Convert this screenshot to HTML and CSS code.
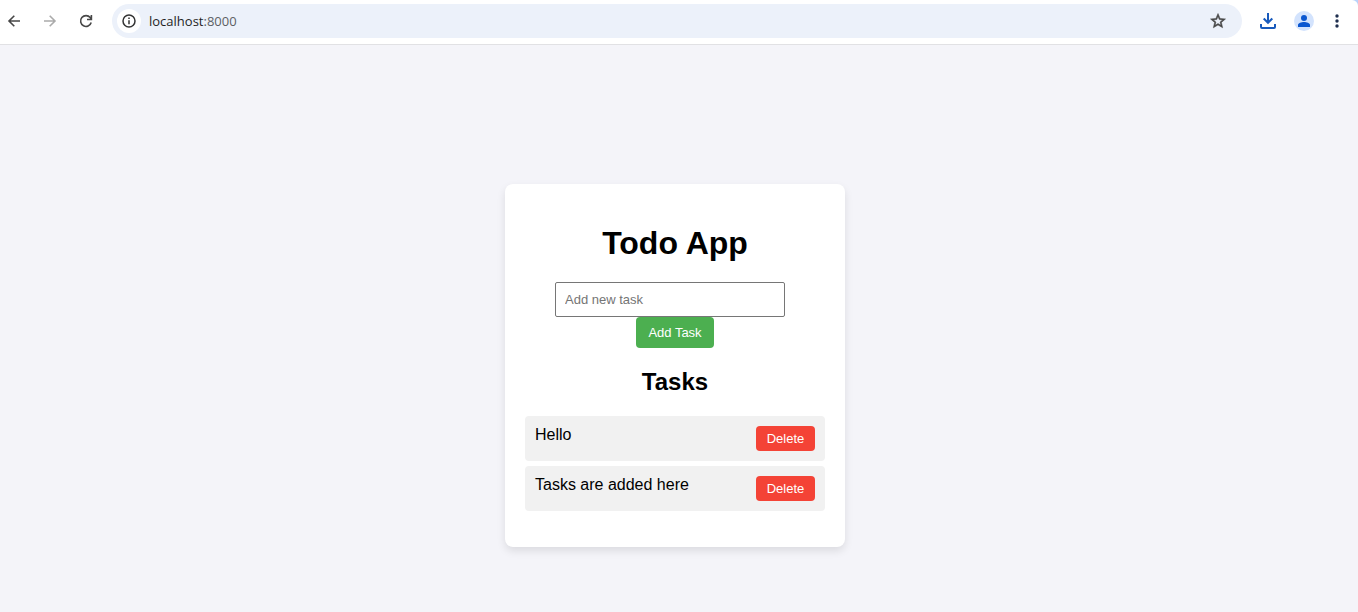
FILE: index.html
```html
<!DOCTYPE html>
<html lang="en">
<head>
<meta charset="utf-8">
<title>Todo App</title>
<link rel="stylesheet" href="styles.css">
</head>
<body>
<header class="frame">
  <div class="toolbar">
    <nav class="group" aria-label="Navigation">
      <button class="icon" aria-label="Back"><svg width="16" height="16" viewBox="0 0 16 16" fill="none" stroke="#474747" stroke-width="1.600"><path d="M14 8H3M8.300 2.700 3 8l5.300 5.300"/></svg></button>
      <button class="icon" aria-label="Forward"><svg width="16" height="16" viewBox="0 0 16 16" fill="none" stroke="#ababab" stroke-width="1.600"><path d="M2 8h11M7.700 2.700 13 8l-5.300 5.300"/></svg></button>
      <button class="icon" aria-label="Reload"><svg width="16" height="16" viewBox="0 0 16 16" fill="none" stroke="#474747" stroke-width="1.600"><path d="M13.200 9.500A5.400 5.400 0 1 1 12.200 4.600L13.200 6M13.400 2V6.500H9"/></svg></button>
    </nav>
    <div class="address">
      <button class="icon info" aria-label="Site information"><svg width="16" height="16" viewBox="0 0 16 16" fill="none" stroke="#333" stroke-width="1.500"><circle cx="8" cy="8" r="6"/><path d="M8 7.200v4M8 4.500v1.500"/></svg></button>
      <span class="url">localhost<span class="port">:8000</span></span>
      <button class="icon" aria-label="Bookmark"><svg width="18" height="18" viewBox="0 0 24 24" fill="#474747" stroke="#474747" stroke-width="0.700"><path d="M22 9.240l-7.190-.62L12 2 9.190 8.630 2 9.240l5.460 4.730L5.820 21 12 17.270 18.180 21l-1.630-7.030L22 9.240zM12 15.400l-3.760 2.270 1-4.280-3.320-2.880 4.380-.38L12 6.100l1.710 4.040 4.380.38-3.320 2.880 1 4.280L12 15.400z"/></svg></button>
    </div>
    <div class="group">
      <button class="icon" aria-label="Downloads"><svg width="18" height="18" viewBox="0 0 18 18" fill="none" stroke="#185abc" stroke-width="2"><path d="M9 1v9.500M4.700 6.500 9 10.800 13.300 6.500M2 12v3q0 1 1 1h12q1 0 1-1v-3"/></svg></button>
      <button class="icon" aria-label="Profile"><svg width="20" height="20" viewBox="0 0 20 20"><circle cx="10" cy="10" r="10" fill="#d3e3fd"/><circle cx="10" cy="7" r="3" fill="#0b57d0"/><path fill="#0b57d0" d="M4 16v-2c0-2 3.500-3 6-3s6 1 6 3v2z"/></svg></button>
      <button class="icon menu" aria-label="Menu"><svg width="16" height="16" viewBox="0 0 16 16" fill="#1f2f4f"><circle cx="8" cy="3" r="1.700"/><circle cx="8" cy="8" r="1.700"/><circle cx="8" cy="13" r="1.700"/></svg></button>
    </div>
  </div>
</header>
<main class="page">
  <section class="card">
    <h1 class="title">Todo App</h1>
    <form class="add-form">
      <input class="task-input" type="text" placeholder="Add new task" aria-label="Add new task">
      <button class="add-button" type="button">Add Task</button>
    </form>
    <h2 class="subtitle">Tasks</h2>
    <ul class="tasks">
      <li class="task"><span>Hello</span><button class="delete-button" type="button">Delete</button></li>
      <li class="task"><span>Tasks are added here</span><button class="delete-button" type="button">Delete</button></li>
    </ul>
  </section>
</main>
</body>
</html>
```
FILE: styles.css
```css
* {
  box-sizing: border-box;
}

body {
  margin: 0;
  min-height: 100vh;
  display: flex;
  flex-direction: column;
  background: #f4f4f9;
  font-family: "Liberation Sans", Arial, sans-serif;
  font-size: 16px;
  line-height: 18px;
  color: #000;
}

button {
  border: none;
  cursor: pointer;
  font-family: inherit;
}

.frame {
  background: #b9d3fb;
}

.toolbar {
  display: flex;
  align-items: center;
  gap: 14px;
  padding: 4px 12px 6px 2px;
  background: #fff;
  border-bottom: 1px solid #e1e1e4;
  border-top-right-radius: 6px;
}

.group {
  display: flex;
  align-items: center;
  gap: 12px;
}

.icon {
  display: flex;
  align-items: center;
  justify-content: center;
  width: 24px;
  height: 24px;
  padding: 0;
  background: none;
}

.menu {
  width: 18px;
}

.address {
  flex: 1;
  display: flex;
  align-items: center;
  gap: 8px;
  height: 34px;
  padding: 0 12px 0 5px;
  border-radius: 17px;
  background: #ecf1fa;
}

.info {
  border-radius: 50%;
  background: #fff;
}

.url {
  flex: 1;
  font-family: "Segoe UI", "Open Sans", sans-serif;
  font-size: 13px;
  color: #1f1f1f;
}

.port {
  color: #5c5f63;
}

.page {
  flex: 1;
  display: flex;
  align-items: center;
  justify-content: center;
  padding: 74px 8px 0 0;
}

.card {
  width: 340px;
  padding: 20px;
  border-radius: 8px;
  background: #fff;
  box-shadow: 0 4px 8px rgba(0, 0, 0, 0.1);
  text-align: center;
}

.title {
  margin: 21px 0;
  font-size: 32px;
  line-height: 36px;
}

.add-form {
  display: flex;
  flex-direction: column;
  align-items: center;
}

.task-input {
  width: 230px;
  height: 35px;
  margin-right: 10px;
  padding: 8px 9px;
  border: 1px solid #767676;
  border-radius: 2px;
  font-family: inherit;
  font-size: 13px;
}

.task-input::placeholder {
  color: #757575;
}

.add-button {
  padding: 8px 12px;
  border-radius: 4px;
  background: #4caf50;
  color: #fff;
  font-size: 13px;
  line-height: 15px;
}

.subtitle {
  margin: 20px 0;
  font-size: 24px;
  line-height: 28px;
}

.tasks {
  display: flex;
  flex-direction: column;
  gap: 5px;
  margin: 0 0 16px;
  padding: 0;
  list-style: none;
}

.task {
  display: flex;
  align-items: flex-start;
  justify-content: space-between;
  padding: 10px;
  border-radius: 4px;
  background: #f1f1f1;
}

.delete-button {
  min-width: 59px;
  padding: 5px 10px;
  border-radius: 4px;
  background: #f44336;
  color: #fff;
  font-size: 13px;
  line-height: 15px;
}
```
